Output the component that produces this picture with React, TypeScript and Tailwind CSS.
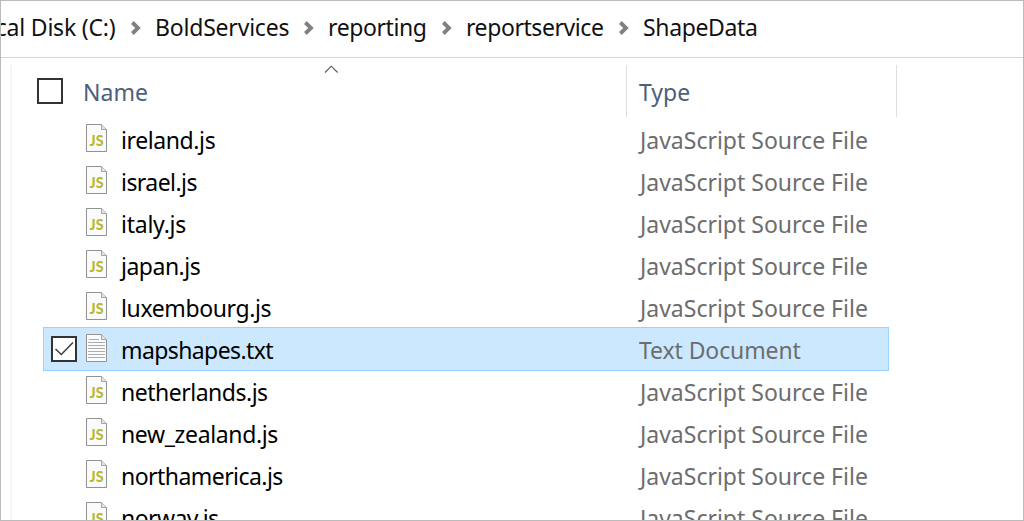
type FileRow = { name: string; kind: "js" | "txt"; tracking: string; selected?: boolean };

const crumbs = [
  { label: "BoldServices", width: "w-[173px]", tracking: "tracking-[-0.2px]" },
  { label: "reporting", width: "w-[138px]", tracking: "tracking-[-0.4px]" },
  { label: "reportservice", width: "w-[177px]", tracking: "tracking-[-0.42px]" },
  { label: "ShapeData", width: "w-[180px]", tracking: "tracking-[-0.35px]" },
];

const files: FileRow[] = [
  { name: "ireland.js", kind: "js", tracking: "tracking-[-0.4px]" },
  { name: "israel.js", kind: "js", tracking: "tracking-[-0.55px]" },
  { name: "italy.js", kind: "js", tracking: "tracking-[-0.25px]" },
  { name: "japan.js", kind: "js", tracking: "tracking-[-0.5px]" },
  { name: "luxembourg.js", kind: "js", tracking: "tracking-[-0.38px]" },
  { name: "mapshapes.txt", kind: "txt", tracking: "tracking-[-0.6px]", selected: true },
  { name: "netherlands.js", kind: "js", tracking: "tracking-[-0.49px]" },
  { name: "new_zealand.js", kind: "js", tracking: "tracking-[-0.36px]" },
  { name: "northamerica.js", kind: "js", tracking: "tracking-[-0.55px]" },
  { name: "norway.js", kind: "js", tracking: "tracking-[-0.55px]" },
];

function Chevron() {
  return (
    <svg className="mt-[19px] h-4 w-[10px] shrink-0" viewBox="0 0 10 16">
      <path d="M0 4 2.7 1 9.7 8 2.7 15 0 12 4.2 8Z" fill="#808080" />
    </svg>
  );
}

function FileIcon({ kind }: { kind: "js" | "txt" }) {
  return (
    <svg className="mt-[7px] h-7 w-[21px] shrink-0" viewBox="0 0 21 28">
      <path d="M.5.5H15.5L20.5 5.5V27.5H.5Z" fill="#fafbfc" stroke="#929292" />
      <path d="M15.5.5V5.5H20.5" fill="#e6e6e6" stroke="#a3a3a3" />
      {kind === "js" ? (
        <text
          x="3.6"
          y="22"
          textLength="14"
          lengthAdjust="spacingAndGlyphs"
          className="fill-[#b9b92f] font-['Lato',sans-serif] text-[15px] font-black"
        >
          JS
        </text>
      ) : (
        <path
          d="M3 5.5H13M2 8.5H19M2 11.5H19M2 14.5H19M2 17.5H19M2 20.5H19M2 23.5H19"
          stroke="#adadad"
        />
      )}
    </svg>
  );
}

function Row({ file }: { file: FileRow }) {
  return (
    <div
      className={
        file.selected
          ? "-mb-0.5 flex h-11 w-[846px] shrink-0 border border-[#99d1ff] bg-[#cce8ff]"
          : "flex h-[42px] w-[846px] shrink-0 border-x border-transparent"
      }
    >
      <div className="w-[42px] shrink-0 pl-[7px]">
        {file.selected && (
          <svg className="mt-2 size-[26px]" viewBox="0 0 26 26">
            <rect x="1" y="1" width="24" height="24" fill="#fff" stroke="#333" strokeWidth="2" />
            <path d="M4.5 13 10.3 18.5 22 6.5" fill="none" stroke="#404040" strokeWidth="1.6" />
          </svg>
        )}
      </div>
      <div className={file.selected ? "-mt-px flex" : "flex"}>
        <FileIcon kind={file.kind} />
        <span className={`ml-[14px] w-[518px] pt-[2px] leading-[42px] text-black ${file.tracking}`}>
          {file.name}
        </span>
        {file.kind === "js" ? (
          <span className="pl-px pt-[2px] leading-[42px] text-[#6d6d6d]">
            JavaScript Source File
          </span>
        ) : (
          <span className="pt-[2px] leading-[42px] tracking-[-0.1px] text-[#6d6d6d]">
            Text Document
          </span>
        )}
      </div>
    </div>
  );
}

export default function App() {
  return (
    <div className="flex h-[521px] w-[1024px] flex-col overflow-hidden whitespace-nowrap border border-[#bbbbbb] bg-white font-['Noto_Sans',sans-serif] text-[23px]">
      <nav className="flex h-[57px] shrink-0 border-b border-[#d6d6d6] leading-[52px] text-[#111]">
        <div className="flex w-[130px] shrink-0 justify-end overflow-hidden pr-[15.5px] tracking-[-0.2px]">
          <span>cal Disk (C:)</span>
        </div>
        {crumbs.map((c) => (
          <div key={c.label} className={`flex shrink-0 ${c.width}`}>
            <Chevron />
            <span className={`pl-[14px] ${c.tracking}`}>{c.label}</span>
          </div>
        ))}
      </nav>
      <main className="ml-[9px] mt-[7px] flex min-h-0 flex-1 flex-col overflow-hidden border-l-2 border-[#f5f5f5]">
        <header className="flex h-[52px] shrink-0 leading-[54px] text-[#4c607a]">
          <div className="flex w-[614px] shrink-0">
            <div className="ml-[25px] mt-[13px] size-[26px] shrink-0 border-2 border-[#333]" />
            <span className="w-[261px] pl-5">Name</span>
            <svg className="h-2 w-[15px]" viewBox="0 0 15 8">
              <path d="M1 7.5 7.3 1.2 13.6 7.5" fill="none" stroke="#555" strokeWidth="1.1" />
            </svg>
          </div>
          <div className="w-[271px] shrink-0 border-x border-[#dedede] pl-[12px]">Type</div>
        </header>
        <div className="flex min-h-0 flex-1 flex-col overflow-hidden pl-[31px]">
          {files.map((f) => (
            <Row key={f.name} file={f} />
          ))}
        </div>
      </main>
    </div>
  );
}
